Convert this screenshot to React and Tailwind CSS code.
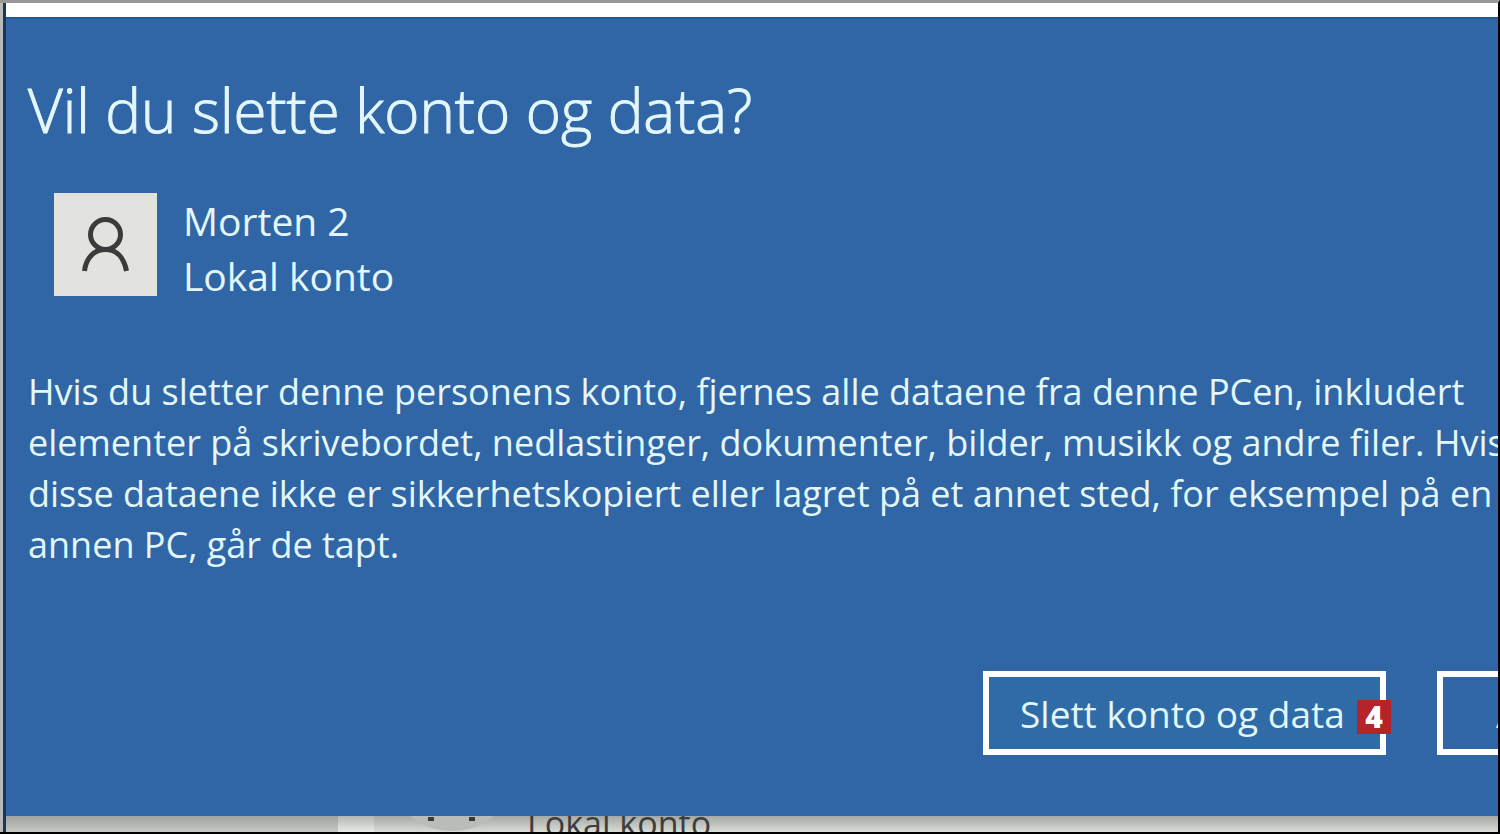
const bodyLines = [
  "Hvis du sletter denne personens konto, fjernes alle dataene fra denne PCen, inkludert",
  "elementer på skrivebordet, nedlastinger, dokumenter, bilder, musikk og andre filer. Hvis",
  "disse dataene ikke er sikkerhetskopiert eller lagret på et annet sted, for eksempel på en",
  "annen PC, går de tapt.",
];

function Avatar() {
  return (
    <div className="w-[103px] h-[103px] shrink-0 bg-[#e2e3de]">
      <svg
        viewBox="0 0 103 103"
        className="w-full h-full"
        fill="none"
        stroke="#3a3b3b"
        strokeWidth="5"
      >
        <circle cx="51.5" cy="41.5" r="15" />
        <path d="M30.500 78C32 64.500 40.500 56.500 51.500 56.500S70 64.500 72.500 78" />
      </svg>
    </div>
  );
}

function Account() {
  return (
    <div className="flex items-start gap-[26px] mt-[41px] pl-[26px]">
      <Avatar />
      <div className="text-[39px] leading-[55px]">
        <p>Morten 2</p>
        <p>Lokal konto</p>
      </div>
    </div>
  );
}

function Actions() {
  return (
    <div className="flex justify-end gap-[51px] mt-[101px]">
      <button className="relative w-[403px] h-[84px] border-6 border-white bg-[#2f6ba7] pl-[31px] pt-[2px] text-left text-[37px] whitespace-nowrap">
        Slett konto og data
        {/* Step marker */}
        <span className="absolute -right-[11px] top-[23px] w-[34px] h-[34px] bg-[#b5232b] text-white text-[30px] leading-[34px] font-extrabold text-center">
          4
        </span>
      </button>
      <button className="w-[61px] h-[84px] border-6 border-r-0 border-white pl-[53px] pt-[2px] text-left text-[37px] whitespace-nowrap overflow-hidden">
        Avbryt
      </button>
    </div>
  );
}

// Strip of the settings page that shows below the dialog
function PageBehind() {
  return (
    <div className="flex h-4 overflow-hidden bg-linear-to-b from-[#a5a8a4] to-[#dadcd7] text-[#3d3f3e]">
      <div className="w-[332px] bg-linear-to-b from-[#9fa29e] to-[#c6c8c4]" />
      <div className="w-[36px] bg-linear-to-b from-[#b4b6b2] to-[#eaebe6]" />
      <svg viewBox="0 0 153 16" className="w-[153px] h-4 shrink-0">
        <ellipse cx="78" cy="-16" rx="48" ry="31" fill="#b9bcb9" />
        <path d="M54 1h6v4h-6zM95 1h6v4h-6z" fill="#3a3b3b" />
      </svg>
      <p className="text-[34px] leading-[14px] whitespace-nowrap">Lokal konto</p>
    </div>
  );
}

function App() {
  return (
    <main className="min-h-screen overflow-hidden flex flex-col bg-[#b9bbba] border-t-3 border-t-[#999] border-b-2 border-b-black border-r-2 border-r-black pl-[3px] font-['Open_Sans','Noto_Sans',sans-serif]">
      <div className="grow flex flex-col border-l-3 border-[#17375c] bg-white">
        <div className="h-[14px] bg-white" />
        <section className="grow bg-[#3066a5] border-t-2 border-[#22599b] text-[#e3f6fb] pl-[22px] pb-[59px]">
          <h1 className="mt-[49px] text-[60px] leading-[84px] font-light [-webkit-text-stroke:1px] whitespace-nowrap">
            Vil du slette konto og data?
          </h1>
          <Account />
          <p className="mt-[63px] text-[36px] leading-[51px] whitespace-nowrap">
            {bodyLines.map((line) => (
              <span key={line} className="block">
                {line}
              </span>
            ))}
          </p>
          <Actions />
        </section>
        <PageBehind />
      </div>
    </main>
  );
}

export default App;
